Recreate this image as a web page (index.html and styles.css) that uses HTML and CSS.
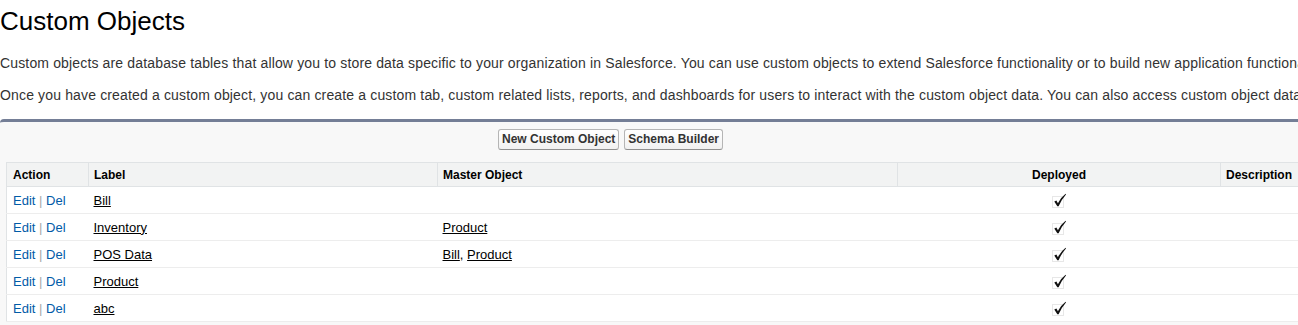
FILE: index.html
```html
<!DOCTYPE html>
<html lang="en">
<head>
    <meta charset="UTF-8">
    <title>Custom Objects</title>
    <link rel="stylesheet" href="styles.css">
</head>
<body>

<div class="page">
    <h1 class="page-title">Custom Objects</h1>
    <p class="intro first">Custom objects are database tables that allow you to store data specific to your organization in Salesforce. You can use custom objects to extend Salesforce functionality or to build new application functionality.</p>
    <p class="intro">Once you have created a custom object, you can create a custom tab, custom related lists, reports, and dashboards for users to interact with the custom object data. You can also access custom object data through the API.</p>

    <!-- list block -->
    <div class="list-block">
        <div class="btn-row">
            <button type="button" class="btn">New Custom Object</button>
            <button type="button" class="btn">Schema Builder</button>
        </div>

        <table class="list">
            <colgroup>
                <col class="c-action">
                <col class="c-label">
                <col class="c-master">
                <col class="c-deployed">
                <col>
            </colgroup>
            <thead>
                <tr>
                    <th>Action</th>
                    <th>Label</th>
                    <th>Master Object</th>
                    <th class="center">Deployed</th>
                    <th>Description</th>
                </tr>
            </thead>
            <tbody>
                <tr>
                    <td class="actions"><a href="#">Edit</a> <span class="sep">|</span> <a href="#">Del</a></td>
                    <td><a class="obj" href="#">Bill</a></td>
                    <td></td>
                    <td class="center"><svg class="check" width="15" height="15" viewBox="0 0 15 15"><rect x="0.5" y="3.5" width="11" height="11" fill="none" stroke="#cfcfcf" stroke-dasharray="1 1"/><path d="M2.3 8.6 L4.4 7.6 L5.9 10.2 Q8.6 4.6 13.6 0.8 L14 1.4 Q9.6 6.2 6.6 13.3 L5.3 13.3 Z" fill="#111"/></svg></td>
                    <td></td>
                </tr>
                <tr>
                    <td class="actions"><a href="#">Edit</a> <span class="sep">|</span> <a href="#">Del</a></td>
                    <td><a class="obj" href="#">Inventory</a></td>
                    <td><a class="obj" href="#">Product</a></td>
                    <td class="center"><svg class="check" width="15" height="15" viewBox="0 0 15 15"><rect x="0.5" y="3.5" width="11" height="11" fill="none" stroke="#cfcfcf" stroke-dasharray="1 1"/><path d="M2.3 8.6 L4.4 7.6 L5.9 10.2 Q8.6 4.6 13.6 0.8 L14 1.4 Q9.6 6.2 6.6 13.3 L5.3 13.3 Z" fill="#111"/></svg></td>
                    <td></td>
                </tr>
                <tr>
                    <td class="actions"><a href="#">Edit</a> <span class="sep">|</span> <a href="#">Del</a></td>
                    <td><a class="obj" href="#">POS Data</a></td>
                    <td><a class="obj" href="#">Bill</a>, <a class="obj" href="#">Product</a></td>
                    <td class="center"><svg class="check" width="15" height="15" viewBox="0 0 15 15"><rect x="0.5" y="3.5" width="11" height="11" fill="none" stroke="#cfcfcf" stroke-dasharray="1 1"/><path d="M2.3 8.6 L4.4 7.6 L5.9 10.2 Q8.6 4.6 13.6 0.8 L14 1.4 Q9.6 6.2 6.6 13.3 L5.3 13.3 Z" fill="#111"/></svg></td>
                    <td></td>
                </tr>
                <tr>
                    <td class="actions"><a href="#">Edit</a> <span class="sep">|</span> <a href="#">Del</a></td>
                    <td><a class="obj" href="#">Product</a></td>
                    <td></td>
                    <td class="center"><svg class="check" width="15" height="15" viewBox="0 0 15 15"><rect x="0.5" y="3.5" width="11" height="11" fill="none" stroke="#cfcfcf" stroke-dasharray="1 1"/><path d="M2.3 8.6 L4.4 7.6 L5.9 10.2 Q8.6 4.6 13.6 0.8 L14 1.4 Q9.6 6.2 6.6 13.3 L5.3 13.3 Z" fill="#111"/></svg></td>
                    <td></td>
                </tr>
                <tr>
                    <td class="actions"><a href="#">Edit</a> <span class="sep">|</span> <a href="#">Del</a></td>
                    <td><a class="obj" href="#">abc</a></td>
                    <td></td>
                    <td class="center"><svg class="check" width="15" height="15" viewBox="0 0 15 15"><rect x="0.5" y="3.5" width="11" height="11" fill="none" stroke="#cfcfcf" stroke-dasharray="1 1"/><path d="M2.3 8.6 L4.4 7.6 L5.9 10.2 Q8.6 4.6 13.6 0.8 L14 1.4 Q9.6 6.2 6.6 13.3 L5.3 13.3 Z" fill="#111"/></svg></td>
                    <td></td>
                </tr>
            </tbody>
        </table>
    </div>
</div>

</body>
</html>
```

FILE: styles.css
```css
body {
    font-family: Arial, "Liberation Sans", sans-serif;
    margin: 0;
    padding: 0;
    color: #333;
    background-color: #fff;
    overflow: hidden;
}

.page {
    width: 1500px;
}

.page-title {
    font-size: 26px;
    font-weight: normal;
    line-height: 30px;
    color: #000;
    margin: 6px 0 0;
}

.intro {
    font-size: 14px;
    letter-spacing: 0.15px;
    line-height: 16px;
    margin: 16px 0 0;
    white-space: nowrap;
}
.intro.first {
    margin-top: 19px;
}

/* list block */
.list-block {
    margin-top: 16px;
    background-color: #f8f8f8;
    border-top: 3px solid #747e96;
    border-radius: 4px 0 0 0;
    padding: 7px 6px 10px;
}

.btn-row {
    display: flex;
    justify-content: center;
    gap: 5px;
    width: 1209px;
    margin-bottom: 12px;
}

.btn {
    font-family: Arial, "Liberation Sans", sans-serif;
    font-size: 12px;
    font-weight: bold;
    line-height: 15px;
    color: #333;
    padding: 2px 3px;
    background: linear-gradient(#ffffff, #f1f1f1);
    border: 1px solid #b5b5b5;
    border-bottom-color: #8f8f8f;
    border-radius: 3px;
    cursor: pointer;
}

.list {
    width: 100%;
    border-collapse: collapse;
    table-layout: fixed;
    background-color: #fff;
    border: 1px solid #e0e3e5;
}
.c-action { width: 82px; }
.c-label { width: 349px; }
.c-master { width: 460px; }
.c-deployed { width: 323px; }

.list th {
    font-size: 12px;
    font-weight: bold;
    color: #000;
    text-align: left;
    height: 23px;
    padding: 0 5px;
    background-color: #f2f3f3;
    border-right: 1px solid #e0e3e5;
    border-bottom: 1px solid #e0e3e5;
}

.list td {
    font-size: 13px;
    color: #000;
    height: 26px;
    padding: 0 5px;
    border-bottom: 1px solid #ededed;
}

.list th:first-child,
.list td:first-child {
    padding-left: 6px;
}

.list .center {
    text-align: center;
}

.actions a {
    color: #015ba7;
    text-decoration: none;
}
.sep {
    color: #a8a8a8;
}

a.obj {
    color: #000;
    text-decoration: underline;
}

.check {
    display: inline-block;
    vertical-align: middle;
}
```
